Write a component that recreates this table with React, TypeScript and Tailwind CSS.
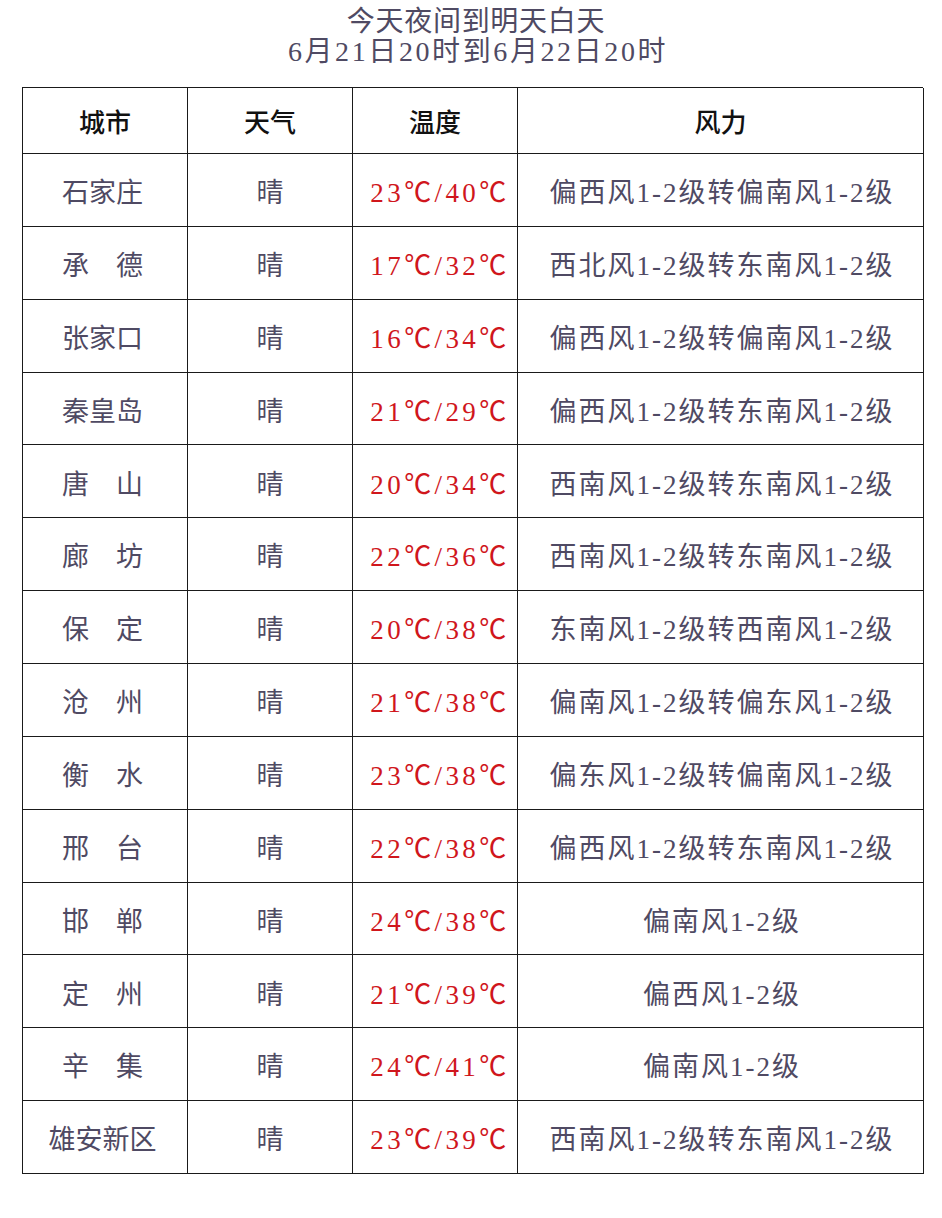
const rows = [
  { city: '石家庄', temp: '23℃/40℃', wind: '偏西风1-2级转偏南风1-2级' },
  { city: '承　德', temp: '17℃/32℃', wind: '西北风1-2级转东南风1-2级' },
  { city: '张家口', temp: '16℃/34℃', wind: '偏西风1-2级转偏南风1-2级' },
  { city: '秦皇岛', temp: '21℃/29℃', wind: '偏西风1-2级转东南风1-2级' },
  { city: '唐　山', temp: '20℃/34℃', wind: '西南风1-2级转东南风1-2级' },
  { city: '廊　坊', temp: '22℃/36℃', wind: '西南风1-2级转东南风1-2级' },
  { city: '保　定', temp: '20℃/38℃', wind: '东南风1-2级转西南风1-2级' },
  { city: '沧　州', temp: '21℃/38℃', wind: '偏南风1-2级转偏东风1-2级' },
  { city: '衡　水', temp: '23℃/38℃', wind: '偏东风1-2级转偏南风1-2级' },
  { city: '邢　台', temp: '22℃/38℃', wind: '偏西风1-2级转东南风1-2级' },
  { city: '邯　郸', temp: '24℃/38℃', wind: '偏南风1-2级' },
  { city: '定　州', temp: '21℃/39℃', wind: '偏西风1-2级' },
  { city: '辛　集', temp: '24℃/41℃', wind: '偏南风1-2级' },
  { city: '雄安新区', temp: '23℃/39℃', wind: '西南风1-2级转东南风1-2级' },
]

const font = { fontFamily: '"Liberation Serif", "Noto Sans CJK SC", serif' }

function Cell({ children, className = '' }: { children: React.ReactNode; className?: string }) {
  return (
    <div className={`flex items-center justify-center border-r border-b border-[#1a1a1a] ${className}`}>
      {children}
    </div>
  )
}

export default function App() {
  return (
    <div className="w-[942px] h-[1218px] bg-white" style={font}>
      {/* 标题 */}
      <div className="pt-[7px] pl-[10px] text-center text-[28px] leading-[30px] text-[#4f4a63]">
        <div className="tracking-[0.7px]">今天夜间到明天白天</div>
        <div className="pl-[4px] tracking-[2.6px]">6月21日20时到6月22日20时</div>
      </div>

      {/* 表格 */}
      <div className="mt-[20px] ml-[22px] w-[901px] h-[1087px] grid grid-cols-[165px_165px_165px_406px] grid-rows-[66px_repeat(14,1fr)] border-l border-t border-[#1a1a1a]">
        <Cell className="pt-[6px] text-[26px] font-medium text-[#111]">城市</Cell>
        <Cell className="pt-[6px] text-[26px] font-medium text-[#111]">天气</Cell>
        <Cell className="pt-[6px] text-[26px] font-medium text-[#111]">温度</Cell>
        <Cell className="pt-[6px] text-[26px] font-medium text-[#111]">风力</Cell>

        {rows.map((r) => (
          <>
            <Cell key={r.city + 'c'} className="pt-[7px] pr-[5px] text-[27px] text-[#4f4a63]">{r.city}</Cell>
            <Cell key={r.city + 'w'} className="pt-[7px] text-[27px] text-[#4f4a63]">晴</Cell>
            <Cell key={r.city + 't'} className="pt-[7px] pl-[10px] text-[27px] text-[#d0161c] tracking-[3.4px]">{r.temp}</Cell>
            <Cell key={r.city + 'f'} className="pt-[7px] pl-[3px] text-[27px] text-[#4f4a63] tracking-[2px]">{r.wind}</Cell>
          </>
        ))}
      </div>
    </div>
  )
}
